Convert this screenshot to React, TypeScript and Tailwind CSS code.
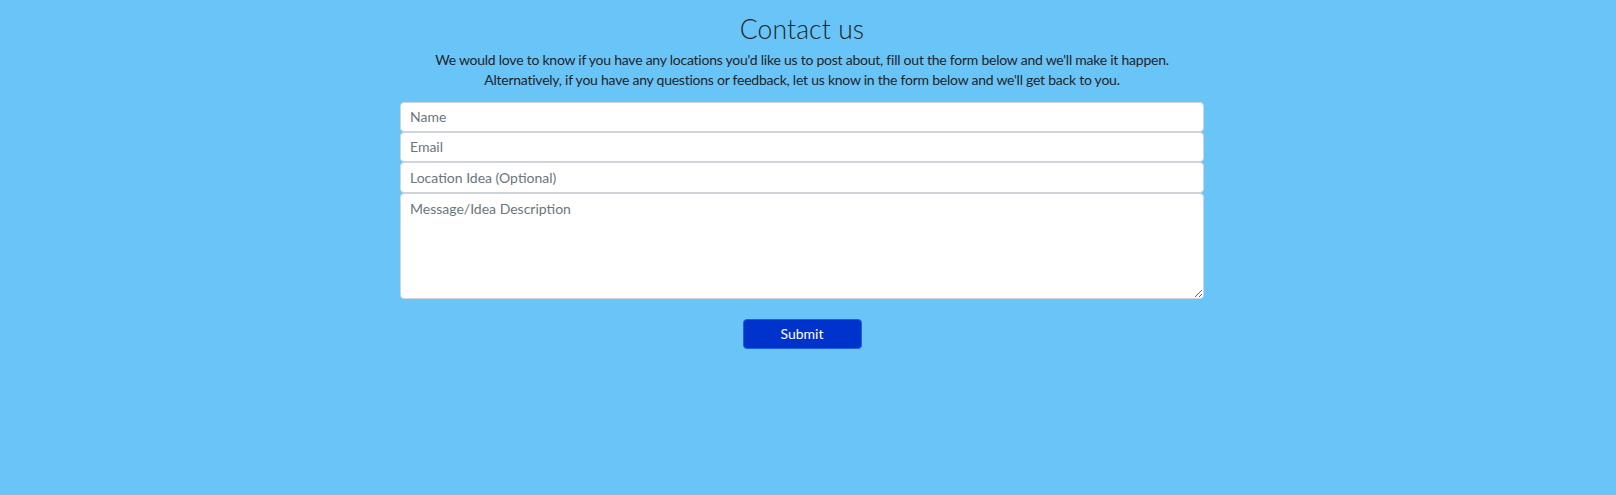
export default function App() {
  return (
    <div
      className="min-h-screen w-full bg-[#69c4f8] text-[#212529]"
      style={{ fontFamily: "Lato, 'Open Sans', sans-serif" }}
    >
      <div className="flex flex-col items-center pr-[12px] pt-[14px]">
        {/* Heading */}
        <h1 className="text-[26.5px] font-light leading-[1.2] tracking-[0.1px]">
          Contact us
        </h1>
        <p className="mt-[4px] text-center text-[14px] leading-[20px] tracking-[-0.24px]">
          We would love to know if you have any locations you'd like us to post
          about, fill out the form below and we'll make it happen.
          <br />
          Alternatively, if you have any questions or feedback, let us know in
          the form below and we'll get back to you.
        </p>

        {/* Form */}
        <form className="mt-[12px] flex w-[804px] flex-col">
          <input
            type="text"
            placeholder="Name"
            className="h-[30px] rounded-[4px] border border-[#ced4da] bg-white px-[9px] text-[14px] placeholder:text-[#6c757d] outline-none"
          />
          <input
            type="email"
            placeholder="Email"
            className="h-[30px] rounded-[4px] border border-[#ced4da] bg-white px-[9px] text-[14px] placeholder:text-[#6c757d] outline-none"
          />
          <input
            type="text"
            placeholder="Location Idea (Optional)"
            className="h-[31px] rounded-[4px] border border-[#ced4da] bg-white px-[9px] text-[14px] placeholder:text-[#6c757d] outline-none"
          />
          <textarea
            placeholder="Message/Idea Description"
            className="h-[106px] rounded-[4px] border border-[#ced4da] bg-white px-[9px] py-[4px] text-[14px] leading-[21px] placeholder:text-[#6c757d] outline-none"
          />

          <div className="mt-[20px] flex justify-center">
            <button
              type="button"
              className="h-[30px] w-[119px] rounded-[4px] border border-[#1d5fe0] bg-[#0033cc] text-[14px] text-white"
            >
              Submit
            </button>
          </div>
        </form>
      </div>
    </div>
  );
}
